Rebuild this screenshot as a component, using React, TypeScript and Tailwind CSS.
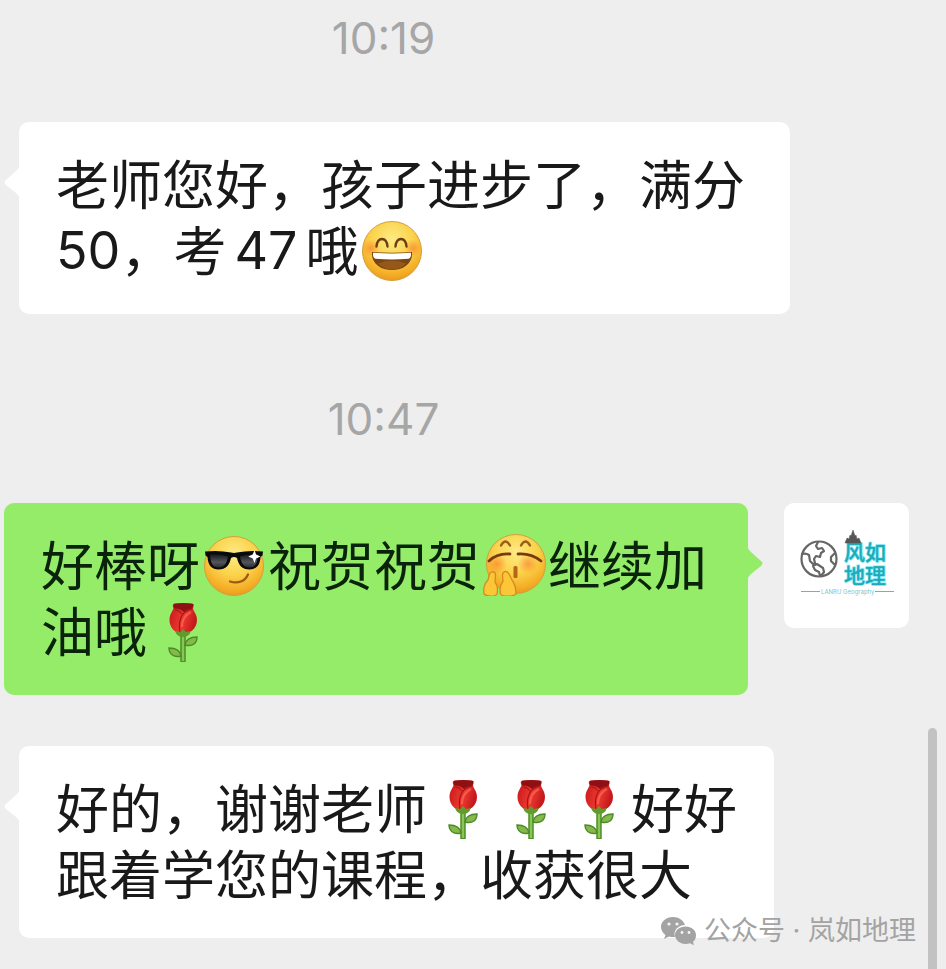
import type { ReactNode } from "react";

function Glyph({ label, children }: { label: string; children: ReactNode }) {
  return (
    <svg role="img" aria-label={label} viewBox="0 -3 66 66" className="mx-px h-[66px] w-[66px] shrink-0">
      {children}
    </svg>
  );
}

function FaceFill({ id }: { id: string }) {
  return (
    <defs>
      <radialGradient id={id} cx="0.5" cy="0.3" r="0.72">
        <stop offset="0" stopColor="#fdeb86" />
        <stop offset="0.5" stopColor="#fbd24a" />
        <stop offset="0.85" stopColor="#f4ac25" />
        <stop offset="1" stopColor="#e8961e" />
      </radialGradient>
      <radialGradient id={id + "-blush"}>
        <stop offset="0" stopColor="#f9762b" stopOpacity="0.6" />
        <stop offset="1" stopColor="#f9762b" stopOpacity="0" />
      </radialGradient>
    </defs>
  );
}

function GrinFace() {
  return (
    <Glyph label="大笑">
      <FaceFill id="grin" />
      <circle cx="33" cy="33" r="29.5" fill="url(#grin)" stroke="#d2a040" strokeWidth="1" />
      <circle cx="12" cy="30" r="8.500" fill="url(#grin-blush)" />
      <circle cx="54" cy="30" r="8.500" fill="url(#grin-blush)" />
      <path d="M17.500 28.500c1-10 10-10 11 0M36.500 28.500c1-10 10-10 11 0" fill="none" stroke="#6e3f12" strokeWidth="2.400" strokeLinecap="round" />
      <path d="M13 34q20 1.500 40 0c1 11.500-8.500 18-20 18s-21-6.500-20-18z" fill="#7a4413" />
      <path d="M14 34.800q19 1.500 38 0c.3 3.200-.6 5.700-2.500 6q-16.500 1.500-33 0c-1.900-.3-2.800-2.800-2.500-6z" fill="#fff" />
      <path d="M19 45.500q14-6 28 0C43.500 50 38 51.300 33 51.300S22.500 50 19 45.500z" fill="#a8651c" opacity="0.6" />
    </Glyph>
  );
}

function CoolFace() {
  return (
    <Glyph label="墨镜">
      <FaceFill id="cool" />
      <linearGradient id="lens" x1="0" y1="0" x2="0" y2="1">
        <stop offset="0" stopColor="#15171c" />
        <stop offset="0.6" stopColor="#55565b" />
        <stop offset="1" stopColor="#2c2d31" />
      </linearGradient>
      <circle cx="33" cy="33" r="29.500" fill="url(#cool)" stroke="#d2a040" strokeWidth="1" />
      <path d="M4 18.500q14-1.500 26 1 3 .8 6 0 12-2.500 26-1l-.5 4-2 1.500C59 32.500 55 36.500 48.500 36.500 41 36.500 37.500 32 36 25q-3-2-6 0C28.500 32 25 36.500 17.500 36.500 11 36.500 7 32.500 6.500 24l-2-1.500z" fill="#08090b" />
      <path d="M9 21.500q9-1 18 2c-1.500 7.500-4 11-9.500 11S9.500 31 9 21.500zM57 21.500q-9-1-18 2c1.500 7.500 4 11 9.500 11s8-3.500 8.500-13z" fill="url(#lens)" />
      <path d="M53.500 17l1.600 4.500 4.400 1.900-4.400 2-1.600 4.600-1.800-4.600-4.500-2 4.500-1.900z" fill="#fff" />
      <path d="M29 48.500c8 2.500 15 0 18-7" fill="none" stroke="#9a5a14" strokeWidth="2.200" strokeLinecap="round" />
    </Glyph>
  );
}

function CheerFace() {
  return (
    <Glyph label="加油">
      <FaceFill id="cheer" />
      <circle cx="35" cy="31" r="29.500" fill="url(#cheer)" stroke="#d2a040" strokeWidth="1" />
      <circle cx="16" cy="31" r="10" fill="url(#cheer-blush)" />
      <circle cx="47" cy="31" r="10" fill="url(#cheer-blush)" />
      <path d="M20 12.500q4.500-8 9 0M40 12.500q4.500-8 9 0" fill="none" stroke="#98601a" strokeWidth="2.400" strokeLinecap="round" />
      <path d="M8 28q8-8 21-7M37 21q13-1 23 7" fill="none" stroke="#7a3a0e" strokeWidth="2.800" strokeLinecap="round" />
      <rect x="32.500" y="33" width="4" height="12" rx="1.500" fill="#b3651a" />
      <path d="M3 61c-1-6 1-11 4-14l1.500-6c1-3 6-3 6 1L14 49c2.500 3 3 7 2 12-2 3-10 3-13 0z" fill="#fbc638" stroke="#d88a1b" strokeWidth="1.300" />
      <path d="M35 61c0-6-1-10-4-14l-3-6c-2-4-7-3-6.500 2L22 48c-3 4-3.500 8-2.500 13 2 3 12 3 15.500 0z" fill="#fbc638" stroke="#d88a1b" strokeWidth="1.300" />
    </Glyph>
  );
}

function Rose() {
  return (
    <Glyph label="玫瑰">
      <defs>
        <linearGradient id="petal" x1="0" y1="0" x2="1" y2="0.300">
          <stop offset="0" stopColor="#c4161a" />
          <stop offset="0.6" stopColor="#ee3a2f" />
          <stop offset="1" stopColor="#c41a1d" />
        </linearGradient>
      </defs>
      <path d="M35 34v29" stroke="#4c8f25" strokeWidth="5.500" />
      <path d="M35 34v28" stroke="#8ac555" strokeWidth="2.500" />
      <path d="M37 46c1-6 6-8 12-8 0 6-4 10-12 8zM33 57c-1-6-6-8-12-8 0 6 5 10 12 8z" fill="#86b94b" stroke="#4c8a27" strokeWidth="1.400" />
      <path d="M35 35c-6 0-13.500-5-13.500-14 0-6 3.500-9 4-12-1.500-3-.5-4.500 2.500-4.500h14.500c3 0 4 1.500 2.500 4.500.5 4 4 6 4 12 0 9-8 14-14 14z" fill="url(#petal)" />
      <path d="M25.500 5q9.500-2 20 0l-1 4.500q-6 1-8.500 3.500-4-4-10-3.500z" fill="#8f1014" />
      <path d="M44 10c-11 2-14 12-12 23M27 11q4 0 7 4" fill="none" stroke="#9f1518" strokeWidth="1.200" />
      <path d="M43 13c-6 3-9 8-9 15" fill="none" stroke="#ff7463" strokeWidth="2" opacity="0.600" />
      <path d="M27 32l5 1 3-3 3 3 5-1q-2 6-8 6t-8-6z" fill="#629a2e" />
    </Glyph>
  );
}

function Time({ children }: { children: ReactNode }) {
  return (
    <time className="flex h-[76px] items-center justify-center pr-[179px] font-[Inter,sans-serif] text-[44px] text-[#a6a6a6]">
      {children}
    </time>
  );
}

function Tail({ side }: { side: "left" | "right" }) {
  return side === "left" ? (
    <svg aria-hidden="true" viewBox="0 0 16 40" className="absolute top-10 right-full -mr-px h-10 w-4">
      <path d="M16 0c0 4-1 6-4 9L2 18q-3 2 0 5l10 8c3 3 4 5 4 9z" fill="#fff" />
    </svg>
  ) : (
    <svg aria-hidden="true" viewBox="0 0 16 40" className="absolute top-10 left-full -ml-px h-10 w-4">
      <path d="M0 0c0 4 1 6 4 9l10 9q3 2 0 5L4 31c-3 3-4 5-4 9z" fill="#95ec69" />
    </svg>
  );
}

function Line({ children }: { children: ReactNode }) {
  return <div className="flex h-[66px] items-center whitespace-nowrap">{children}</div>;
}

function Digits({ children }: { children: ReactNode }) {
  return <span className="pt-[6px] font-[Inter,sans-serif] text-[52px]">{children}</span>;
}

function Avatar() {
  return (
    <svg role="img" aria-label="岚如地理" viewBox="0 0 125 125" className="h-[125px] w-[125px] shrink-0 rounded-[10px] bg-white">
      <g fill="none" stroke="#666" strokeWidth="2.200" strokeLinejoin="round" strokeLinecap="round">
        <circle cx="35" cy="56" r="17.500" />
        <path d="M18 51q4-1 7 1l1 6 3 3 2-1-1-4 2-3 4 1 1-4 3-2-2-3-4 1-2-3 2-4M29 63l4-2 6 4 1 4-3 4M29 63l2 4 4 2 1 4M51 50l-4 4 0 4 4 4" />
      </g>
      <g fill="#22a9b8" stroke="#6fe6f5" strokeWidth="1.500" paintOrder="stroke" strokeLinejoin="round" className="font-['Noto_Sans_CJK_SC',sans-serif] text-[21px] font-medium">
        <text x="60" y="57">风如</text>
        <text x="60" y="80">地理</text>
      </g>
      <path d="M61 40l2-5 2 1 1-4 1 1 2-6 2 6 1-1 1 4 2-1 2 5z" fill="#555" stroke="#555" strokeWidth="0.500" />
      <path d="M17 88.500h19M91 88.500h19" stroke="#6fb3bb" strokeWidth="1" />
      <text x="37" y="91" fill="#7cc5cd" className="font-[Inter,sans-serif] text-[6px]">LANRU Geography</text>
    </svg>
  );
}

function Watermark() {
  return (
    <div className="absolute right-[30px] bottom-[18px] flex items-center gap-2 font-[Inter,'Noto_Sans_CJK_SC',sans-serif] text-[27px] leading-10 text-[#a3a3a3]">
      <svg aria-hidden="true" viewBox="0 0 36 30" className="h-[30px] w-9">
        <path d="M13 1C6 1 1 5.500 1 11c0 3.500 2 6 4.500 8L4 23l5-2.500q3 .8 6 .5C13 14 18 9.500 25 9 23.500 4 18.500 1 13 1z" fill="#a3a3a3" />
        <path d="M25.500 10.500c-6 0-10.500 4-10.500 8.500s4.500 9 10.500 9q2.500 0 4.500-.7l4 2-1-3.500c2-1.500 3-4 3-6.800 0-4.500-4.500-8.500-10.500-8.500z" fill="#a3a3a3" />
        <g fill="#f5f5f5">
          <circle cx="9" cy="8" r="1.600" />
          <circle cx="17" cy="8" r="1.600" />
          <circle cx="22" cy="16.500" r="1.400" />
          <circle cx="29" cy="16.500" r="1.400" />
        </g>
      </svg>
      <span>公众号 · 岚如地理</span>
    </div>
  );
}

export default function App() {
  return (
    <main className="relative min-h-screen overflow-hidden bg-[#eeeeee] font-['Noto_Sans_CJK_SC',sans-serif] text-[53px] leading-[66px] text-[#191919]">
      <Time>10:19</Time>
      <div className="mt-[46px] flex pl-[19px]">
        <div className="relative w-[771px] rounded-[10px] bg-white px-[37px] pt-[27px] pb-[33px]">
          <Tail side="left" />
          <Line>老师您好，孩子进步了，满分</Line>
          <Line>
            <Digits>50</Digits>，考
            <span className="mx-2 flex">
              <Digits>47</Digits>
            </span>
            哦
            <GrinFace />
          </Line>
        </div>
      </div>

      <div className="mt-[67px]">
        <Time>10:47</Time>
      </div>
      <div className="mt-[46px] flex items-start justify-end gap-9 pr-[37px]">
        <div className="relative w-[744px] rounded-[10px] bg-[#95ec69] px-[37px] pt-[27px] pb-[33px] text-[#0a240c]">
          <Tail side="right" />
          <Line>
            好棒呀
            <CoolFace />
            祝贺祝贺
            <CheerFace />
            继续加
          </Line>
          <Line>
            油哦
            <Rose />
          </Line>
        </div>
        <Avatar />
      </div>

      <div className="mt-[51px] flex pl-[19px]">
        <div className="relative w-[755px] rounded-[10px] bg-white px-[37px] pt-[27px] pb-[33px]">
          <Tail side="left" />
          <Line>
            好的，谢谢老师
            <Rose />
            <Rose />
            <Rose />
            好好
          </Line>
          <Line>跟着学您的课程，收获很大</Line>
        </div>
      </div>

      <div aria-hidden="true" className="absolute top-[728px] right-[9px] bottom-0 w-[9px] rounded-t-full bg-[#c2c2c2]" />
      <Watermark />
    </main>
  );
}
